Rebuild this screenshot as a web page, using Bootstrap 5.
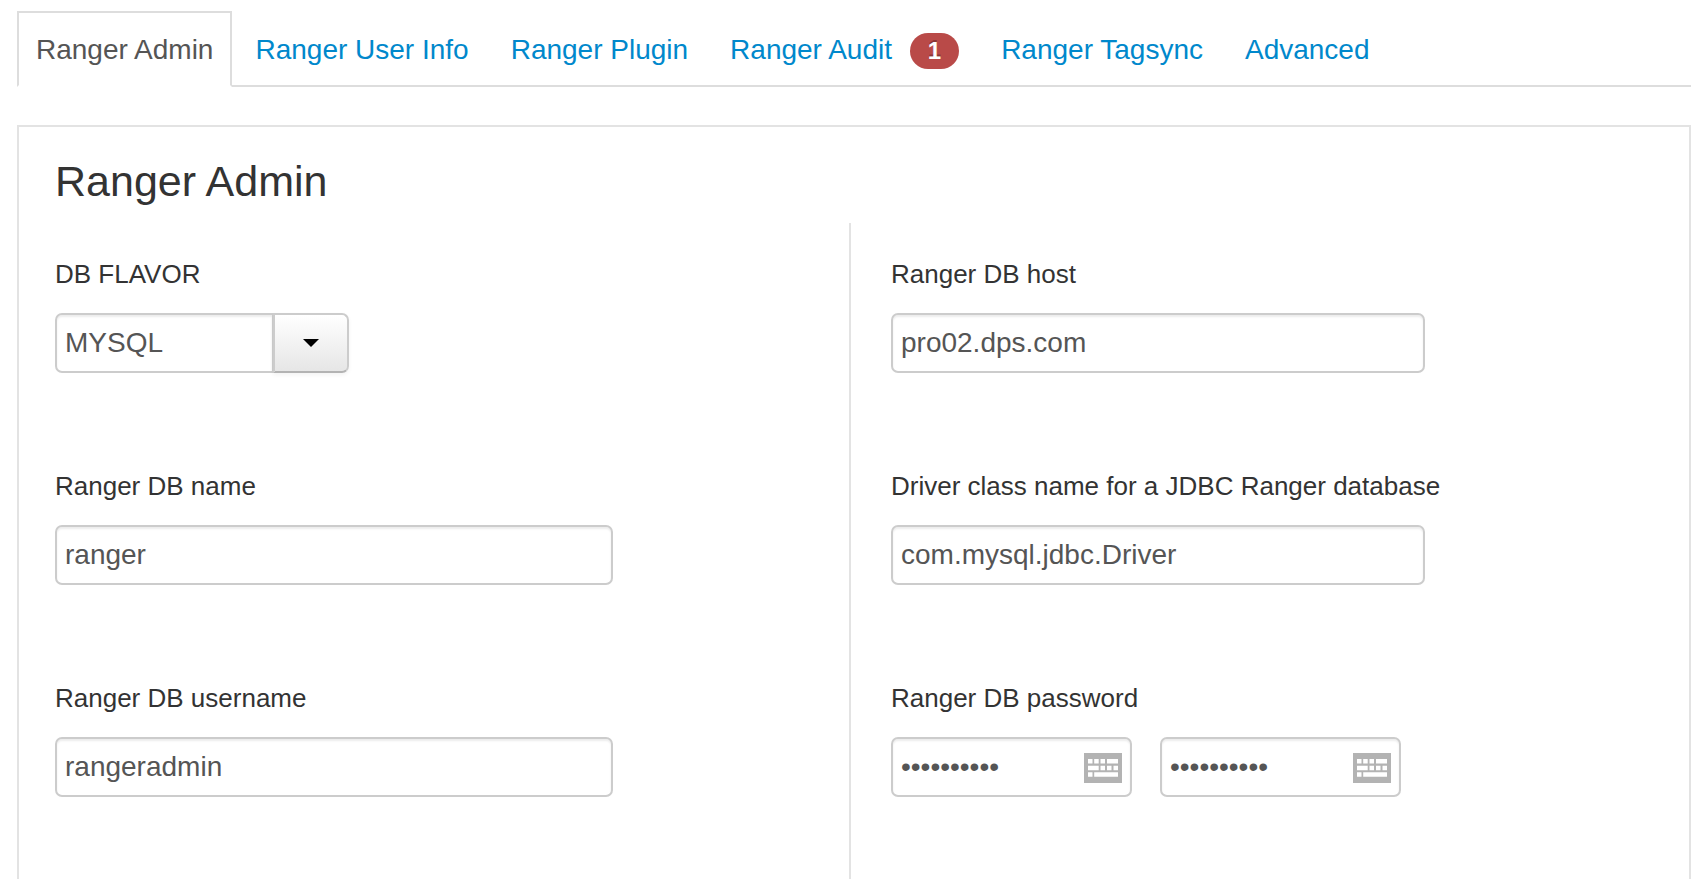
<!DOCTYPE html>
<html lang="en">
<head>
<meta charset="utf-8">
<meta name="viewport" content="width=device-width, initial-scale=1">
<title>Ranger Admin</title>
<link rel="stylesheet" href="https://cdn.jsdelivr.net/npm/bootstrap@5.3.0/dist/css/bootstrap.min.css">
<style>
  body { font-family: "Liberation Sans", Arial, sans-serif; font-size: 28px; line-height: 40px; color: #333; background: #fff; }
  .page-shell { padding: 11px 16px 0 17px; }

  .ranger-tabs { --bs-nav-tabs-border-width: 2px; --bs-nav-tabs-border-color: #ddd; gap: 4px; margin-bottom: 38px; }
  .ranger-tabs .nav-link { padding: 17px 17px 15px; border-radius: 0; font-size: 28px; font-weight: 400; color: #08c; }
  .ranger-tabs .nav-link:not(.active):hover { border-color: transparent; color: #005580; }
  .ranger-tabs .nav-link.active { color: #555; background: #fff; border-color: #ddd #ddd #fff; }
  .error-count { margin-left: 10px; padding: 4px 18px; font-size: 24px; line-height: 28px; background: #b94a48; text-shadow: 0 -2px 0 rgba(0,0,0,.25); }

  .config-panel { border: 2px solid #e3e3e3; border-bottom: 0; padding: 14px 46px 0 36px; }
  .config-title { font-size: 43px; line-height: 80px; font-weight: 400; margin: 0 0 2px; }
  .config-col { padding-top: 32px; padding-bottom: 32px; }
  .config-col + .config-col { border-left: 2px solid #e3e3e3; padding-left: 40px; }
  .config-field + .config-field { margin-top: 94px; }
  .config-field label { display: block; font-size: 26px; line-height: 38px; margin: 0 0 20px; }

  .config-field .form-control { height: 60px; padding: 8px; font-size: 28px; line-height: 40px; color: #555; border: 2px solid #ccc; border-radius: 7px; box-shadow: inset 0 2px 2px rgba(0,0,0,.075); }
  .w-left { max-width: 558px; }
  .w-right { max-width: 534px; }
  .flavor-group { max-width: 294px; }
  .config-field .flavor-group .form-control { border-radius: 7px 0 0 7px; }
  .btn-flavor { width: 76px; border: 2px solid #ccc; border-bottom-color: #b3b3b3; border-radius: 7px; background: linear-gradient(#fff, #e6e6e6) padding-box; box-shadow: 0 2px 4px rgba(0,0,0,.05); }
  .caret-down { border: 8px solid transparent; border-top-color: #000; border-bottom: 0; }
  .password-pair { max-width: 510px; gap: 28px; }
  .kbd-icon { position: absolute; right: 10px; top: 16px; width: 38px; height: 30px; }
</style>
</head>
<body>
<div class="page-shell container-fluid min-vh-100 d-flex flex-column">
  <ul class="nav nav-tabs ranger-tabs">
    <li class="nav-item"><a class="nav-link active" aria-current="page" href="#admin">Ranger Admin</a></li>
    <li class="nav-item"><a class="nav-link" href="#user-info">Ranger User Info</a></li>
    <li class="nav-item"><a class="nav-link" href="#plugin">Ranger Plugin</a></li>
    <li class="nav-item"><a class="nav-link" href="#audit">Ranger Audit <span class="badge rounded-pill error-count">1</span></a></li>
    <li class="nav-item"><a class="nav-link" href="#tagsync">Ranger Tagsync</a></li>
    <li class="nav-item"><a class="nav-link" href="#advanced">Advanced</a></li>
  </ul>

  <main class="config-panel flex-grow-1 d-flex flex-column" id="admin">
    <h1 class="config-title">Ranger Admin</h1>
    <div class="row g-0 flex-grow-1">
      <div class="col-6 config-col">
        <div class="config-field">
          <label for="db-flavor">DB FLAVOR</label>
          <div class="input-group flavor-group flex-nowrap">
            <input type="text" class="form-control" id="db-flavor" value="MYSQL">
            <button type="button" class="btn btn-flavor d-flex align-items-center justify-content-center p-0" aria-label="Choose DB flavor"><span class="caret-down"></span></button>
          </div>
        </div>
        <div class="config-field">
          <label for="db-name">Ranger DB name</label>
          <input type="text" class="form-control w-left" id="db-name" value="ranger">
        </div>
        <div class="config-field">
          <label for="db-user">Ranger DB username</label>
          <input type="text" class="form-control w-left" id="db-user" value="rangeradmin">
        </div>
      </div>
      <div class="col-6 config-col">
        <div class="config-field">
          <label for="db-host">Ranger DB host</label>
          <input type="text" class="form-control w-right" id="db-host" value="pro02.dps.com">
        </div>
        <div class="config-field">
          <label for="jdbc-driver">Driver class name for a JDBC Ranger database</label>
          <input type="text" class="form-control w-right" id="jdbc-driver" value="com.mysql.jdbc.Driver">
        </div>
        <div class="config-field">
          <label for="db-pass">Ranger DB password</label>
          <div class="password-pair d-flex">
            <div class="position-relative flex-fill">
              <input type="password" class="form-control" id="db-pass" value="rangerpass">
              <svg class="kbd-icon" viewBox="0 0 38 30" aria-hidden="true"><path fill="#b3b3b3" d="M0 0h38v30H0z"/><path id="kbd-keys" fill="#fff" d="M4 6h4.500v4.500H4zM10.200 6h4.500v4.500h-4.500zM16.500 6h4.500v4.500h-4.500zM23 6H34v4.500H23zM4 12.700h10.700v4.500H4zM16.500 12.700h4.500v4.500h-4.500zM23 12.700h4.500v4.500H23zM29.500 12.700H34v4.500h-4.500zM4 19.200h4.500v4.500H4zM10.200 19.200H34v4.500H10.200z"/></svg>
            </div>
            <div class="position-relative flex-fill">
              <input type="password" class="form-control" id="db-pass-confirm" aria-label="Confirm Ranger DB password" value="rangerpass">
              <svg class="kbd-icon" viewBox="0 0 38 30" aria-hidden="true"><path fill="#b3b3b3" d="M0 0h38v30H0z"/><use href="#kbd-keys" fill="#fff"/></svg>
            </div>
          </div>
        </div>
      </div>
    </div>
  </main>
</div>
<script src="https://cdn.jsdelivr.net/npm/bootstrap@5.3.0/dist/js/bootstrap.bundle.min.js"></script>
</body>
</html>
